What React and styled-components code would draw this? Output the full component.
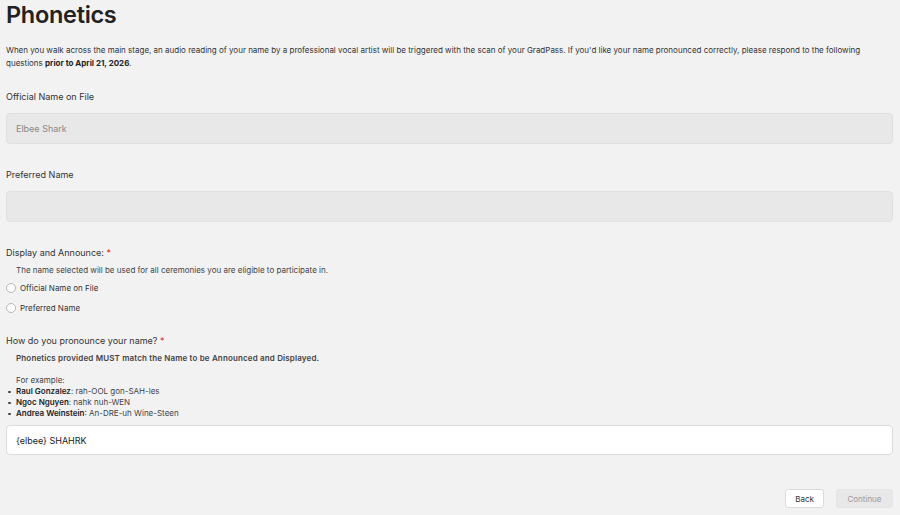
import styled, { createGlobalStyle } from "styled-components";

const GlobalStyle = createGlobalStyle`
  html, body {
    margin: 0;
    padding: 0;
    background: #f2f2f2;
  }
  body {
    font-family: "Inter", "Noto Sans", sans-serif;
    color: #2a2a2a;
  }
`;

export default function App() {
  return (
    <>
      <GlobalStyle />
      <Page>
        <Title>Phonetics</Title>
        <Intro>
          When you walk across the main stage, an audio reading of your name by a
          professional vocal artist will be triggered with the scan of your
          GradPass. If you'd like your name pronounced correctly, please respond
          to the following questions <b>prior to April 21, 2026</b>.
        </Intro>

        <Field $top={20.5}>
          <Label>Official Name on File</Label>
          <Input disabled value="Elbee Shark" readOnly />
        </Field>

        <Field $top={25.5}>
          <Label>Preferred Name</Label>
          <Input disabled value="" readOnly />
        </Field>

        <Field $top={24.5}>
          <Label>
            Display and Announce: <Req>*</Req>
          </Label>
          <Help>The name selected will be used for all ceremonies you are eligible to participate in.</Help>
          <RadioRow $top={7}>
            <Radio />
            <span>Official Name on File</span>
          </RadioRow>
          <RadioRow $top={9}>
            <Radio />
            <span>Preferred Name</span>
          </RadioRow>
        </Field>

        <Field $top={21.5}>
          <Label>
            How do you pronounce your name? <Req>*</Req>
          </Label>
          <Help $bold>Phonetics provided MUST match the Name to be Announced and Displayed.</Help>
          <Example>For example:</Example>
          <Examples>
            <li><b>Raul Gonzalez</b>: rah-OOL gon-SAH-les</li>
            <li><b>Ngoc Nguyen</b>: nahk nuh-WEN</li>
            <li><b>Andrea Weinstein</b>: An-DRE-uh Wine-Steen</li>
          </Examples>
          <Input $white $top={6} $h={30} defaultValue="{elbee} SHAHRK" />
        </Field>

        <Actions>
          <Button>Back</Button>
          <Button $disabled>Continue</Button>
        </Actions>
      </Page>
    </>
  );
}

const Page = styled.div`
  width: 900px;
  height: 515px;
  box-sizing: border-box;
  padding: 0 7px 0 6px;
  display: flex;
  flex-direction: column;
`;

const Title = styled.h1`
  margin: 0;
  padding-top: 1px;
  font-size: 23.5px;
  font-weight: 600;
  line-height: 28px;
  color: #222;
  letter-spacing: -0.3px;
`;

const Intro = styled.p`
  margin: 15px 0 0;
  font-size: 8px;
  line-height: 13px;
  color: #333;
  b {
    font-weight: 700;
    color: #222;
  }
`;

const Field = styled.div`
  display: flex;
  flex-direction: column;
  margin-top: ${(p) => p.$top}px;
`;

const Label = styled.div`
  font-size: 9px;
  line-height: 12px;
  color: #333;
`;

const Req = styled.span`
  color: #e02020;
`;

const Input = styled.input`
  margin-top: ${(p) => p.$top || 10}px;
  height: ${(p) => p.$h || 31}px;
  box-sizing: border-box;
  border: 1px solid ${(p) => (p.$white ? "#dcdcdc" : "#e0e0e0")};
  border-radius: 4px;
  background: ${(p) => (p.$white ? "#fff" : "#e8e8e8")};
  padding: 0 9px;
  font-family: inherit;
  font-size: 9px;
  color: ${(p) => (p.$white ? "#222" : "#8a8a8a")};
  outline: none;
  &:disabled {
    color: #8a8a8a;
  }
`;

const Help = styled.div`
  margin: 6px 0 0 10px;
  font-size: 8px;
  line-height: 11px;
  color: #444;
  font-weight: ${(p) => (p.$bold ? 600 : 400)};
  letter-spacing: ${(p) => (p.$bold ? "0.15px" : "0")};
`;

const RadioRow = styled.label`
  display: flex;
  align-items: center;
  gap: 4px;
  margin-top: ${(p) => p.$top}px;
  font-size: 8px;
  line-height: 11px;
  color: #333;
`;

const Radio = styled.span`
  width: 10px;
  height: 10px;
  box-sizing: border-box;
  border-radius: 50%;
  border: 1px solid #b8b8b8;
  background: #fff;
`;

const Example = styled.div`
  margin: 11px 0 0 10px;
  font-size: 8px;
  line-height: 11px;
  color: #444;
`;

const Examples = styled.ul`
  margin: 0;
  padding: 0 0 0 10px;
  list-style: none;
  font-size: 8px;
  line-height: 11px;
  color: #444;
  li {
    position: relative;
  }
  li::before {
    content: "";
    position: absolute;
    left: -8px;
    top: 4.5px;
    width: 2.5px;
    height: 2.5px;
    border-radius: 50%;
    background: #444;
  }
  b {
    font-weight: 600;
    color: #222;
  }
`;

const Actions = styled.div`
  display: flex;
  justify-content: flex-end;
  gap: 12px;
  margin-top: 34px;
`;

const Button = styled.button`
  height: 19px;
  box-sizing: border-box;
  padding: 0 ${(p) => (p.$disabled ? 10.5 : 9)}px;
  border-radius: 3px;
  border: 1px solid ${(p) => (p.$disabled ? "#e4e4e4" : "#dadada")};
  background: ${(p) => (p.$disabled ? "#e8e8e8" : "#fff")};
  color: ${(p) => (p.$disabled ? "#9a9a9a" : "#333")};
  font-family: inherit;
  font-size: 8px;
`;
